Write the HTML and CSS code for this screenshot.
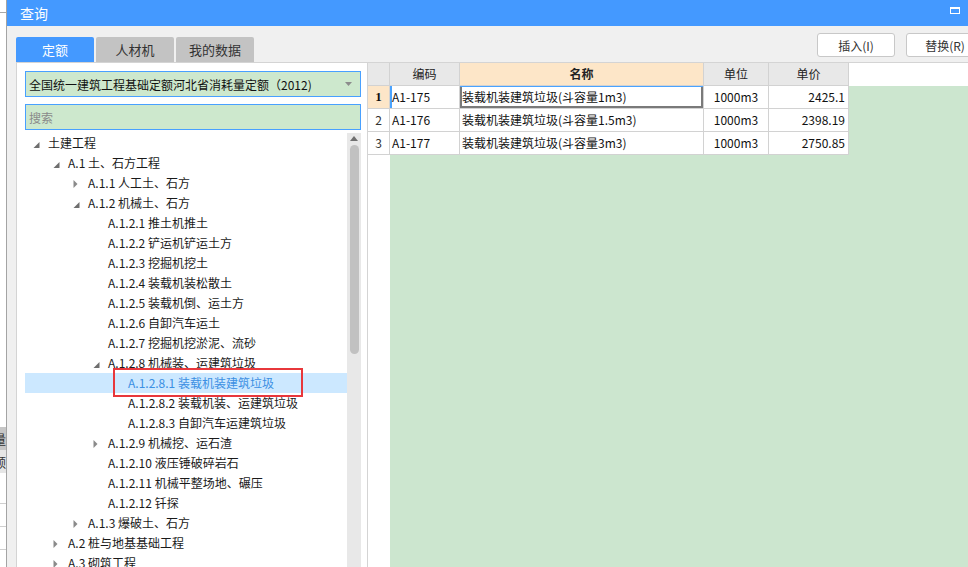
FILE: index.html
```html
<!DOCTYPE html>
<html lang="zh">
<head>
<meta charset="utf-8">
<title>查询</title>
<link rel="stylesheet" href="styles.css">
</head>
<body>
<div class="screen">
  <div class="sliver">
    <div class="sl-top"></div>
    <div class="sl-gap"></div>
    <div class="sl-tab dark">量</div>
    <div class="sl-tab light">额</div>
    <div class="sl-row first"></div>
    <div class="sl-row"></div>
    <div class="sl-row"></div>
  </div>
  <div class="dialog">
    <div class="titlebar">
      <span class="title">查询</span>
      <span class="max-icon"></span>
    </div>
    <div class="dlg-body">
      <div class="toprow">
        <div class="tabs">
          <div class="tab active">定额</div>
          <div class="tab">人材机</div>
          <div class="tab">我的数据</div>
        </div>
        <div class="actions">
          <button class="btn">插入(I)</button>
          <button class="btn">替换(R)</button>
        </div>
      </div>
      <div class="main">
        <div class="leftpanel">
          <div class="combo">
            <span>全国统一建筑工程基础定额河北省消耗量定额（2012)</span>
            <svg class="combo-arrow" width="7" height="4" viewBox="0 0 7 4"><polygon points="0,0 7,0 3.5,4" fill="#8c8c8c"/></svg>
          </div>
          <div class="search">搜索</div>
          <div class="treewrap">
            <div class="tree">
              <div class="node l0"><svg class="arw" width="15" height="20" viewBox="0 0 15 20"><polygon points="6.5,9 6.5,15 0.5,15" fill="#6e6e6e"/></svg><span>土建工程</span></div>
              <div class="node l1"><svg class="arw" width="15" height="20" viewBox="0 0 15 20"><polygon points="6.5,9 6.5,15 0.5,15" fill="#6e6e6e"/></svg><span>A.1 土、石方工程</span></div>
              <div class="node l2"><svg class="arw" width="15" height="20" viewBox="0 0 15 20"><polygon points="0.5,7 4.5,11 0.5,15" fill="#8a8a8a"/></svg><span>A.1.1 人工土、石方</span></div>
              <div class="node l2"><svg class="arw" width="15" height="20" viewBox="0 0 15 20"><polygon points="6.5,9 6.5,15 0.5,15" fill="#6e6e6e"/></svg><span>A.1.2 机械土、石方</span></div>
              <div class="node l3"><span class="sp"></span><span>A.1.2.1 推土机推土</span></div>
              <div class="node l3"><span class="sp"></span><span>A.1.2.2 铲运机铲运土方</span></div>
              <div class="node l3"><span class="sp"></span><span>A.1.2.3 挖掘机挖土</span></div>
              <div class="node l3"><span class="sp"></span><span>A.1.2.4 装载机装松散土</span></div>
              <div class="node l3"><span class="sp"></span><span>A.1.2.5 装载机倒、运土方</span></div>
              <div class="node l3"><span class="sp"></span><span>A.1.2.6 自卸汽车运土</span></div>
              <div class="node l3"><span class="sp"></span><span>A.1.2.7 挖掘机挖淤泥、流砂</span></div>
              <div class="node l3"><svg class="arw" width="15" height="20" viewBox="0 0 15 20"><polygon points="6.5,9 6.5,15 0.5,15" fill="#6e6e6e"/></svg><span>A.1.2.8 机械装、运建筑垃圾</span></div>
              <div class="node l4 selected"><span class="sp"></span><span>A.1.2.8.1 装载机装建筑垃圾</span></div>
              <div class="node l4"><span class="sp"></span><span>A.1.2.8.2 装载机装、运建筑垃圾</span></div>
              <div class="node l4"><span class="sp"></span><span>A.1.2.8.3 自卸汽车运建筑垃圾</span></div>
              <div class="node l3"><svg class="arw" width="15" height="20" viewBox="0 0 15 20"><polygon points="0.5,7 4.5,11 0.5,15" fill="#8a8a8a"/></svg><span>A.1.2.9 机械挖、运石渣</span></div>
              <div class="node l3"><span class="sp"></span><span>A.1.2.10 液压锤破碎岩石</span></div>
              <div class="node l3"><span class="sp"></span><span>A.1.2.11 机械平整场地、碾压</span></div>
              <div class="node l3"><span class="sp"></span><span>A.1.2.12 钎探</span></div>
              <div class="node l2"><svg class="arw" width="15" height="20" viewBox="0 0 15 20"><polygon points="0.5,7 4.5,11 0.5,15" fill="#8a8a8a"/></svg><span>A.1.3 爆破土、石方</span></div>
              <div class="node l1"><svg class="arw" width="15" height="20" viewBox="0 0 15 20"><polygon points="0.5,7 4.5,11 0.5,15" fill="#8a8a8a"/></svg><span>A.2 桩与地基基础工程</span></div>
              <div class="node l1"><svg class="arw" width="15" height="20" viewBox="0 0 15 20"><polygon points="0.5,7 4.5,11 0.5,15" fill="#8a8a8a"/></svg><span>A.3 砌筑工程</span></div>
            </div>
            <div class="scrollbar">
              <svg class="sb-up" width="8" height="5" viewBox="0 0 8 5"><polygon points="0,5 8,5 4,0" fill="#707070"/></svg>
              <div class="sb-thumb"></div>
            </div>
            <div class="redbox"></div>
          </div>
        </div>
        <div class="rightpanel">
          <div class="grid-head">
            <div class="c c0 hd"></div>
            <div class="c c1 hd">编码</div>
            <div class="c c2 hd name-hd">名称</div>
            <div class="c c3 hd">单位</div>
            <div class="c c4 hd">单价</div>
          </div>
          <div class="grid-body">
            <div class="grow">
              <div class="c c0 rn cur">1</div>
              <div class="c c1 code cur-code">A1-175</div>
              <div class="c c2 focus">装载机装建筑垃圾(斗容量1m3)</div>
              <div class="c c3 unit">1000m3</div>
              <div class="c c4 price">2425.1</div>
            </div>
            <div class="grow">
              <div class="c c0 rn">2</div>
              <div class="c c1 code">A1-176</div>
              <div class="c c2">装载机装建筑垃圾(斗容量1.5m3)</div>
              <div class="c c3 unit">1000m3</div>
              <div class="c c4 price">2398.19</div>
            </div>
            <div class="grow">
              <div class="c c0 rn">3</div>
              <div class="c c1 code">A1-177</div>
              <div class="c c2">装载机装建筑垃圾(斗容量3m3)</div>
              <div class="c c3 unit">1000m3</div>
              <div class="c c4 price">2750.85</div>
            </div>
          </div>
        </div>
      </div>
    </div>
  </div>
</div>
</body>
</html>
```

FILE: styles.css
```css
html, body {
  margin: 0;
  padding: 0;
}
body {
  width: 968px;
  height: 567px;
  overflow: hidden;
  font-family: "Noto Sans CJK SC", "Liberation Sans", sans-serif;
  font-size: 12px;
  color: #1a1a1a;
  background: #fff;
}
.screen {
  display: flex;
  width: 968px;
  height: 567px;
}

/* background app sliver */
.sliver {
  width: 6px;
  flex: none;
  border-right: 1px solid #a4a4a4;
  background: #fff;
  display: flex;
  flex-direction: column;
  overflow: hidden;
}
.sl-top {
  height: 12px;
  border-bottom: 1px solid #a8a8a8;
}
.sl-gap {
  height: 414px;
}
.sl-tab {
  height: 23px;
  line-height: 23px;
  white-space: nowrap;
  text-indent: -7px;
  font-size: 13px;
  color: #333;
}
.sl-tab.dark { background: #c6c6c6; }
.sl-tab.light { background: #e6e6e6; }
.sl-row {
  height: 22px;
  border-bottom: 1px solid #cfcfcf;
}
.sl-row.first { height: 30px; }

/* dialog */
.dialog {
  flex: 1;
  min-width: 0;
  display: flex;
  flex-direction: column;
  background: #f0f0f0;
  overflow: hidden;
}
.titlebar {
  height: 26px;
  flex: none;
  background: #4499ff;
  color: #fff;
  display: flex;
  align-items: center;
  justify-content: space-between;
  padding: 0 8px 0 13px;
  font-size: 14px;
}
.title { line-height: 26px; }
.max-icon {
  width: 10px;
  height: 7px;
  box-sizing: border-box;
  border: 1px solid #fff;
  border-top-width: 2px;
  align-self: flex-start;
  margin-top: 7px;
}
.dlg-body {
  flex: 1;
  min-height: 0;
  display: flex;
  flex-direction: column;
}
.toprow {
  height: 36px;
  flex: none;
  display: flex;
  justify-content: space-between;
}
.tabs {
  display: flex;
  gap: 2px;
  align-self: flex-end;
  margin-left: 9px;
}
.tab {
  width: 78px;
  height: 25px;
  line-height: 25px;
  text-align: center;
  font-size: 13px;
  background: #c3c3c3;
  color: #333;
  border-radius: 2px 2px 0 0;
}
.tab.active {
  background: #4499ff;
  color: #fff;
}
.actions {
  display: flex;
  gap: 11px;
  margin-top: 7px;
  margin-right: -16px;
}
.btn {
  width: 78px;
  height: 24px;
  box-sizing: border-box;
  background: #fff;
  border: 1px solid #c8c8c8;
  border-radius: 3px;
  font-family: "Noto Sans CJK SC", "Liberation Sans", sans-serif;
  font-size: 12px;
  color: #333;
  padding: 0;
}

.main {
  flex: 1;
  min-height: 0;
  display: flex;
  padding-left: 9px;
}

/* left panel */
.leftpanel {
  width: 352px;
  flex: none;
  box-sizing: border-box;
  border: 1px solid #d4d4d4;
  border-bottom: none;
  background: #fff;
  padding: 8px 6px 0 8px;
  display: flex;
  flex-direction: column;
}
.combo, .search {
  height: 26px;
  flex: none;
  box-sizing: border-box;
  border: 1px solid #48a0ff;
  background: #cde8cd;
  display: flex;
  align-items: center;
  padding: 0 8px 0 3px;
  font-size: 12px;
}
.combo {
  justify-content: space-between;
  color: #111;
}
.search {
  margin-top: 7px;
  color: #8a8a8a;
}
.treewrap {
  margin-top: 3px;
  flex: 1;
  min-height: 0;
  position: relative;
  display: flex;
}
.tree {
  flex: 1;
  min-width: 0;
}
.node {
  height: 20px;
  line-height: 20px;
  display: flex;
  align-items: center;
  white-space: nowrap;
  font-size: 12px;
  color: #1a1a1a;
}
.node .arw, .node .sp {
  width: 15px;
  height: 20px;
  flex: none;
  display: block;
}
.l0 { padding-left: 8px; }
.l1 { padding-left: 28px; }
.l2 { padding-left: 48px; }
.l3 { padding-left: 68px; }
.l4 { padding-left: 88px; }
.node.selected {
  background: #cce8ff;
  color: #3b8fe3;
}
.scrollbar {
  width: 14px;
  flex: none;
  background: #e8e8e8;
  display: flex;
  flex-direction: column;
  align-items: center;
}
.sb-up {
  margin-top: 3px;
  display: block;
}
.sb-thumb {
  margin-top: 4px;
  width: 9px;
  height: 209px;
  border-radius: 5px;
  background: #c1c1c1;
}
.redbox {
  position: absolute;
  left: 88px;
  top: 235px;
  width: 190px;
  height: 29px;
  box-sizing: border-box;
  border: 2px solid #e8373b;
}

/* right panel / grid */
.rightpanel {
  flex: 1;
  min-width: 0;
  border-top: 1px solid #d4d4d4;
  background: #fff;
  display: flex;
  flex-direction: column;
}
.grid-head {
  display: flex;
  height: 23px;
  flex: none;
  background: #fff;
}
.grid-body {
  flex: 1;
  background: linear-gradient(to right, #fff 22px, #cce6cf 22px);
}
.grow {
  display: flex;
  height: 23px;
}
.c {
  box-sizing: border-box;
  height: 23px;
  line-height: 22px;
  border-right: 1px solid #d2d2d2;
  border-bottom: 1px solid #d2d2d2;
  background: #fff;
  white-space: nowrap;
  overflow: hidden;
  padding: 0 2px;
  font-size: 12px;
  color: #111;
}
.c0 { width: 22px; text-align: center; padding: 0; }
.c1 { width: 70px; }
.c2 { width: 244px; }
.c3 { width: 65px; }
.c4 { width: 80px; }
.hd {
  background: #e8e8e8;
  text-align: center;
  color: #222;
}
.name-hd {
  background: #fde6c8;
  font-weight: bold;
}
.rn { color: #333; }
.rn.cur {
  background: #fde6c8;
  font-family: "Liberation Serif", serif;
  font-weight: bold;
  font-size: 13px;
  color: #111;
}
.cur-code {
  box-shadow: inset 2px 0 0 #4aa3ff;
}
.focus {
  box-shadow: inset 0 1px 0 #4aa3ff, inset 2px 0 0 #7a7a7a, inset -2px 0 0 #7a7a7a, inset 0 -2px 0 #7a7a7a;
}
.unit { text-align: center; }
.price { text-align: right; padding-right: 3px; }
```
